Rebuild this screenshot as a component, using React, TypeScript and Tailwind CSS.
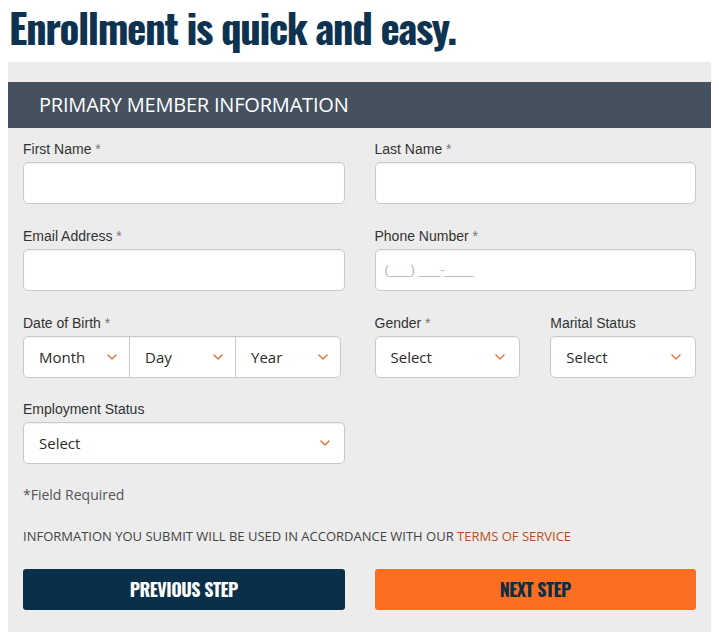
const labelCls = "block text-[14px] leading-[20px] text-[#333] mb-[3px] font-['Liberation_Sans',Arial,sans-serif]";
const boxCls =
  "h-[42px] bg-white border border-[#c9c9c9] rounded-[5px] shadow-[inset_0_1px_2px_rgba(0,0,0,0.06)]";
const condensed = "font-['Oswald','Liberation_Sans_Narrow','DejaVu_Sans_Condensed',sans-serif]";

const Label = ({ text, req }: { text: string; req?: boolean }) => (
  <label className={labelCls}>
    {text}
    {req && <span className="text-[#777]"> *</span>}
  </label>
);

const Field = ({ label, req, placeholder }: { label: string; req?: boolean; placeholder?: string }) => (
  <div>
    <Label text={label} req={req} />
    <div className={`${boxCls} flex items-center px-[9px]`}>
      {placeholder && (
        <span className="text-[13px] text-[#b3b3b3] font-['Liberation_Sans',Arial,sans-serif]">{placeholder}</span>
      )}
    </div>
  </div>
);

const Chevron = () => (
  <svg width="10" height="6" viewBox="0 0 10 6" fill="none">
    <path d="M1 1l4 4 4-4" stroke="#e0763a" strokeWidth="1.5" strokeLinecap="round" strokeLinejoin="round" />
  </svg>
);

const SelectPart = ({ text, className = "" }: { text: string; className?: string }) => (
  <div className={`flex items-center justify-between pl-[15px] pr-[12px] h-full ${className}`}>
    <span className="text-[15px] text-[#2b2b2b]">{text}</span>
    <Chevron />
  </div>
);

const Select = ({ label, req, className = "" }: { label: string; req?: boolean; className?: string }) => (
  <div className={className}>
    <Label text={label} req={req} />
    <div className={boxCls}>
      <SelectPart text="Select" className="pr-[14px]" />
    </div>
  </div>
);

export default function App() {
  return (
    <div className="w-[719px] h-[641px] bg-white font-['Open_Sans',sans-serif]">
      <h1 className={`pl-[9px] pb-[8px] text-[41px] leading-[54px] font-bold text-[#0e3350] tracking-[-1.4px] whitespace-nowrap ${condensed}`}>
        Enrollment is quick and easy.
      </h1>
      <div className="ml-[8px] w-[703px] bg-[#ececec] pt-[20px] pb-[22px]">
        <div className="h-[46px] bg-[#45515f] flex items-center pl-[31px]">
          <span className="text-white text-[20px] tracking-[-0.2px]">PRIMARY MEMBER INFORMATION</span>
        </div>
        <div className="px-[15px] pt-[11px]">
          <div className="grid grid-cols-2 gap-x-[30px] gap-y-[22px]">
            <Field label="First Name" req />
            <Field label="Last Name" req />
            <Field label="Email Address" req />
            <Field label="Phone Number" req placeholder="(___) ___-____" />
            <div>
              <Label text="Date of Birth" req />
              <div className={`${boxCls} w-[318px] flex`}>
                <SelectPart text="Month" className="w-[106px] border-r border-[#c9c9c9]" />
                <SelectPart text="Day" className="w-[106px] border-r border-[#c9c9c9]" />
                <SelectPart text="Year" className="flex-1" />
              </div>
            </div>
            <div className="grid grid-cols-2 gap-x-[30px]">
              <Select label="Gender" req />
              <Select label="Marital Status" />
            </div>
          </div>
          <Select label="Employment Status" className="w-[322px] mt-[21px]" />
          <p className="mt-[21px] text-[14px] leading-[20px] text-[#555]">*Field Required</p>
          <p className="mt-[21px] text-[13px] leading-[20px] text-[#444] uppercase">
            Information you submit will be used in accordance with our{" "}
            <a className="text-[#b5501f]">Terms of Service</a>
          </p>
          <div className="mt-[23px] grid grid-cols-2 gap-x-[30px]">
            <button className={`h-[41px] rounded-[3px] bg-[#08304a] text-white text-[18px] tracking-[-0.5px] font-bold uppercase ${condensed}`}>
              Previous Step
            </button>
            <button className={`h-[41px] rounded-[3px] bg-[#fc6e22] text-[#0b2d45] text-[18px] tracking-[-0.5px] font-bold uppercase ${condensed}`}>
              Next Step
            </button>
          </div>
        </div>
      </div>
    </div>
  );
}
